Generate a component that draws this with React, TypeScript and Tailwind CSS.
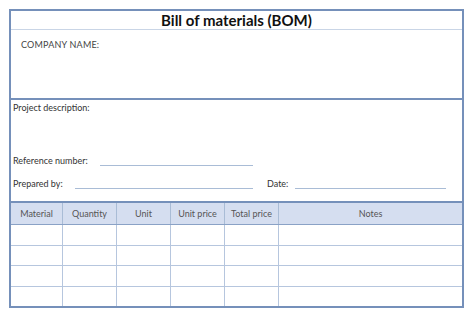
import React from "react";

const cols = ["Material", "Quantity", "Unit", "Unit price", "Total price", "Notes"];

export default function App() {
  const rows = [0, 1, 2, 3];
  return (
    <div className="w-[474px] h-[318px] bg-white pt-[9px] pl-[9px]" style={{ fontFamily: "Lato, 'Open Sans', sans-serif" }}>
      <div className="w-[455px] h-[299px] border-2 border-[#7590ba] flex flex-col text-[#333]">
        <div className="h-[19px] flex items-center justify-center border-b border-[#c9d5e6] text-[15px] font-bold text-[#111] leading-none">
          Bill of materials (BOM)
        </div>
        <div className="h-[70px] border-b-2 border-[#7590ba] pl-[10px] pt-[8px] text-[9px] tracking-[0.2px] text-[#444]">
          COMPANY NAME:
        </div>
        <div className="h-[101px] flex flex-col pl-[2px] text-[9px] text-[#333]">
          <div className="pt-[2px] leading-[12px]">Project description:</div>
          <div className="mt-[41px] flex items-end h-[12px]">
            <span className="w-[87px]">Reference number:</span>
            <div className="w-[153px] border-b border-[#a9bcd6] mb-[1px]" />
          </div>
          <div className="mt-[11px] flex items-end h-[12px]">
            <span className="w-[62px]">Prepared by:</span>
            <div className="w-[178px] border-b border-[#a9bcd6] mb-[1px]" />
            <span className="ml-[14px] w-[28px]">Date:</span>
            <div className="w-[151px] border-b border-[#a9bcd6] mb-[1px]" />
          </div>
        </div>
        <div className="flex-1 border-t-2 border-[#7590ba] flex flex-col">
          <div className="h-[22px] bg-[#d5def0] border-b border-[#8aa2c6] grid grid-cols-[52px_54px_54px_54px_54px_1fr] text-[9px] text-[#555]">
            {cols.map((c, i) => (
              <div key={c} className={`flex items-center justify-center ${i < 5 ? "border-r border-[#a9bcd6]" : ""}`}>{c}</div>
            ))}
          </div>
          {rows.map((r) => (
            <div key={r} className={`flex-1 grid grid-cols-[52px_54px_54px_54px_54px_1fr] ${r < 3 ? "border-b border-[#b6c6de]" : ""}`}>
              {cols.map((c, i) => (
                <div key={c} className={i < 5 ? "border-r border-[#b6c6de]" : ""} />
              ))}
            </div>
          ))}
        </div>
      </div>
    </div>
  );
}
